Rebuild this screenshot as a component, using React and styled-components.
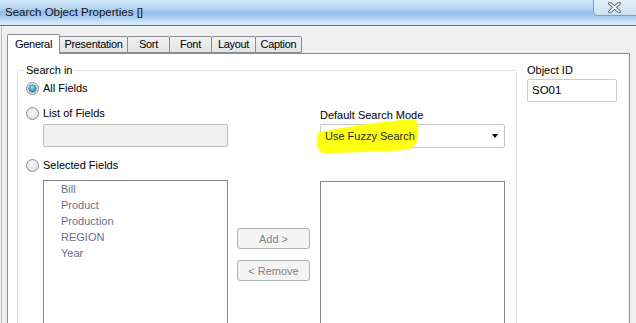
import React from 'react'
import styled, { createGlobalStyle } from 'styled-components'

const GlobalStyle = createGlobalStyle`
    html, body {
        margin: 0;
        padding: 0;
        background: #f0f0f0;
    }
    body {
        font-family: "Liberation Sans", Arial, sans-serif;
        font-size: 11px;
        color: #000;
    }
`

const Window = styled.div`
    width: 636px;
    height: 323px;
    overflow: hidden;
    background: #f0f0f0;
    display: flex;
    flex-direction: column;
`

const TitleBar = styled.div`
    height: 25px;
    flex-shrink: 0;
    display: flex;
    align-items: flex-start;
    overflow: hidden;
    border-bottom: 1px solid #5f7487;
    background: linear-gradient(
        to bottom,
        #d2e9fb 0%,
        #bcdaf5 28%,
        #97bdea 50%,
        #a9cbef 68%,
        #cae4f8 88%,
        #d6ecfa 100%
    );
`

const Title = styled.div`
    font-size: 11.5px;
    line-height: 25px;
    padding-left: 5px;
    color: #111;
`

const CloseButton = styled.div`
    margin-left: auto;
    margin-top: -1px;
    margin-right: -2px;
    width: 45px;
    height: 17px;
    box-sizing: border-box;
    border: 1px solid #8d9cae;
    border-bottom-left-radius: 4px;
    background: linear-gradient(to bottom, #e4f1fb, #c9e0f3);
    display: flex;
    align-items: center;
    justify-content: center;
    padding-right: 3px;
`

const Body = styled.div`
    flex: 1;
    margin-left: 1px;
    border-left: 1px solid #b7c0c9;
    padding: 8px 0 0 5px;
    display: flex;
    flex-direction: column;
`

const TabStrip = styled.div`
    display: flex;
    align-items: flex-end;
    height: 20px;
    margin-bottom: -1px;
`

const Tab = styled.div`
    position: relative;
    box-sizing: border-box;
    width: ${p => p.$w}px;
    height: ${p => (p.$active ? 20 : 17)}px;
    margin-bottom: ${p => (p.$active ? 0 : 1)}px;
    margin-left: ${p => (p.$active ? 0 : -1)}px;
    border: 1px solid #898c95;
    border-bottom: ${p => (p.$active ? 'none' : '1px solid #898c95')};
    border-radius: 2px 2px 0 0;
    background: ${p => (p.$active ? '#fff' : 'linear-gradient(to bottom, #f2f2f2, #e3e3e3)')};
    z-index: ${p => (p.$active ? 2 : 1)};
    font-size: 11px;
    letter-spacing: -0.3px;
    line-height: ${p => (p.$active ? 18 : 15)}px;
    padding-left: ${p => (p.$active ? 7 : 0)}px;
    text-align: ${p => (p.$active ? 'left' : 'center')};
    white-space: nowrap;
    &:first-child {
        margin-left: 0;
    }
`

const TabPage = styled.div`
    flex: 1;
    box-sizing: border-box;
    width: 623px;
    border: 1px solid #898c95;
    background: #fff;
    display: flex;
    align-items: flex-start;
    gap: 10px;
    padding: 9px 0 0 9px;
`

const GroupBox = styled.fieldset`
    box-sizing: border-box;
    width: 500px;
    min-width: 0;
    height: 300px;
    margin: 0;
    padding: 0 0 0 8px;
    border: 1px solid #d5dfe5;
    border-radius: 3px;
`

const Legend = styled.legend`
    padding: 0 2px;
    margin-left: -2px;
    line-height: 14px;
    font-size: 11px;
`

const RadioRow = styled.label`
    display: flex;
    align-items: center;
    gap: 4px;
    height: 14px;
    margin-top: ${p => p.$top || 0}px;
    line-height: 14px;
`

const RadioCircle = styled.span`
    box-sizing: border-box;
    width: 13px;
    height: 13px;
    border-radius: 50%;
    border: 1px solid #8e8f8f;
    background: radial-gradient(circle at 50% 40%, #fbfbfb 0%, #e8e8e8 55%, #cfcfcf 100%);
    display: flex;
    align-items: center;
    justify-content: center;
    flex-shrink: 0;
`

const RadioDot = styled.span`
    width: 7px;
    height: 7px;
    border-radius: 50%;
    background: radial-gradient(circle at 45% 35%, #a9e4ff 0%, #3fa3e0 45%, #155f96 100%);
    box-shadow: 0 0 0 0.5px #1c4f78;
`

const SplitRow = styled.div`
    display: flex;
    align-items: flex-start;
`

const LeftCol = styled.div`
    width: 202px;
    display: flex;
    flex-direction: column;
`

const RightCol = styled.div`
    margin-left: 92px;
    display: flex;
    flex-direction: column;
`

const FieldLabel = styled.div`
    line-height: 14px;
    margin-top: ${p => p.$top || 0}px;
`

const DisabledInput = styled.div`
    box-sizing: border-box;
    width: 185px;
    height: 23px;
    margin: 4px 0 0 17px;
    border: 1px solid #bdbdbd;
    border-radius: 2px;
    background: #f0f0f0;
`

const Select = styled.div`
    position: relative;
    box-sizing: border-box;
    width: 185px;
    height: 24px;
    margin-top: 2px;
    border: 1px solid #c5c5c5;
    border-radius: 2px;
    background: #fff;
    display: flex;
    align-items: center;
    padding: 0 6px 0 4px;
`

const SelectText = styled.span`
    position: relative;
    z-index: 1;
    color: #2a2a2a;
    font-size: 11px;
`

const Highlight = styled.svg`
    position: absolute;
    left: -6px;
    top: -9px;
    z-index: 0;
`

const Arrow = styled.span`
    position: relative;
    z-index: 1;
    margin-left: auto;
    width: 0;
    height: 0;
    border-left: 3.5px solid transparent;
    border-right: 3.5px solid transparent;
    border-top: 4px solid #000;
`

const ListRow = styled.div`
    display: flex;
    align-items: flex-start;
    margin-top: 8px;
`

const ListBox = styled.div`
    box-sizing: border-box;
    width: 185px;
    height: 160px;
    margin-left: ${p => p.$left}px;
    margin-top: ${p => p.$top || 0}px;
    border: 1px solid #828790;
    background: #fff;
    padding: 0 0 0 17px;
`

const ListItem = styled.div`
    line-height: 16px;
    height: 16px;
    color: #6c6c8c;
    font-size: 11px;
`

const ButtonCol = styled.div`
    margin-left: 9px;
    padding-top: 48px;
    display: flex;
    flex-direction: column;
    gap: 11px;
`

const Button = styled.div`
    box-sizing: border-box;
    width: 73px;
    height: 21px;
    border: 1px solid #adb2b5;
    border-radius: 3px;
    background: #f4f4f4;
    color: #838383;
    font-size: 11px;
    display: flex;
    align-items: center;
    justify-content: center;
`

const SideCol = styled.div`
    display: flex;
    flex-direction: column;
`

const IdInput = styled.div`
    box-sizing: border-box;
    width: 90px;
    height: 23px;
    margin-top: 2px;
    border: 1px solid #c9ccd1;
    border-radius: 2px;
    padding-left: 4px;
    line-height: 21px;
    font-size: 11.5px;
`

const tabs = [
    { name: 'General', w: 53 },
    { name: 'Presentation', w: 69 },
    { name: 'Sort', w: 43 },
    { name: 'Font', w: 43 },
    { name: 'Layout', w: 45 },
    { name: 'Caption', w: 47 },
]

const fields = ['Bill', 'Product', 'Production', 'REGION', 'Year']

const Radio = ({ checked, top, children }) => (
    <RadioRow $top={top}>
        <RadioCircle>{checked && <RadioDot />}</RadioCircle>
        {children}
    </RadioRow>
)

const App = () => {
    return (
        <Window>
            <GlobalStyle />
            <TitleBar>
                <Title>Search Object Properties []</Title>
                <CloseButton>
                    <svg width="13" height="11" viewBox="0 0 13 11">
                        <path d="M2 1.5 L11 9.5 M11 1.5 L2 9.5" stroke="#4a5563" strokeWidth="3.6" strokeLinecap="round" />
                        <path d="M2 1.5 L11 9.5 M11 1.5 L2 9.5" stroke="#f4f6f8" strokeWidth="1.8" strokeLinecap="round" />
                    </svg>
                </CloseButton>
            </TitleBar>
            <Body>
                <TabStrip>
                    {tabs.map(t => (
                        <Tab key={t.name} $w={t.w} $active={t.name === 'General'}>
                            {t.name}
                        </Tab>
                    ))}
                </TabStrip>
                <TabPage>
                    <GroupBox>
                        <Legend>Search in</Legend>
                        <Radio checked top={4}>All Fields</Radio>
                        <SplitRow>
                            <LeftCol>
                                <Radio top={11}>List of Fields</Radio>
                                <DisabledInput />
                            </LeftCol>
                            <RightCol>
                                <FieldLabel $top={13}>Default Search Mode</FieldLabel>
                                <Select>
                                    <Highlight width="110" height="44" viewBox="0 0 110 44">
                                        <path
                                            d="M4 16 C 25 12, 60 6, 99 3 C 104 4, 104 13, 103 21 C 102 29, 97 33, 90 34 C 60 36, 30 37, 9 37 C 2 36, 1 29, 2 23 C 2 19, 3 17, 4 16 Z"
                                            fill="#ffff14"
                                        />
                                    </Highlight>
                                    <SelectText>Use Fuzzy Search</SelectText>
                                    <Arrow />
                                </Select>
                            </RightCol>
                        </SplitRow>
                        <Radio top={10}>Selected Fields</Radio>
                        <ListRow>
                            <ListBox $left={17}>
                                {fields.map(f => (
                                    <ListItem key={f}>{f}</ListItem>
                                ))}
                            </ListBox>
                            <ButtonCol>
                                <Button>Add &gt;</Button>
                                <Button>&lt; Remove</Button>
                            </ButtonCol>
                            <ListBox $left={10} $top={1} />
                        </ListRow>
                    </GroupBox>
                    <SideCol>
                        <FieldLabel>Object ID</FieldLabel>
                        <IdInput>SO01</IdInput>
                    </SideCol>
                </TabPage>
            </Body>
        </Window>
    )
}

export default App
